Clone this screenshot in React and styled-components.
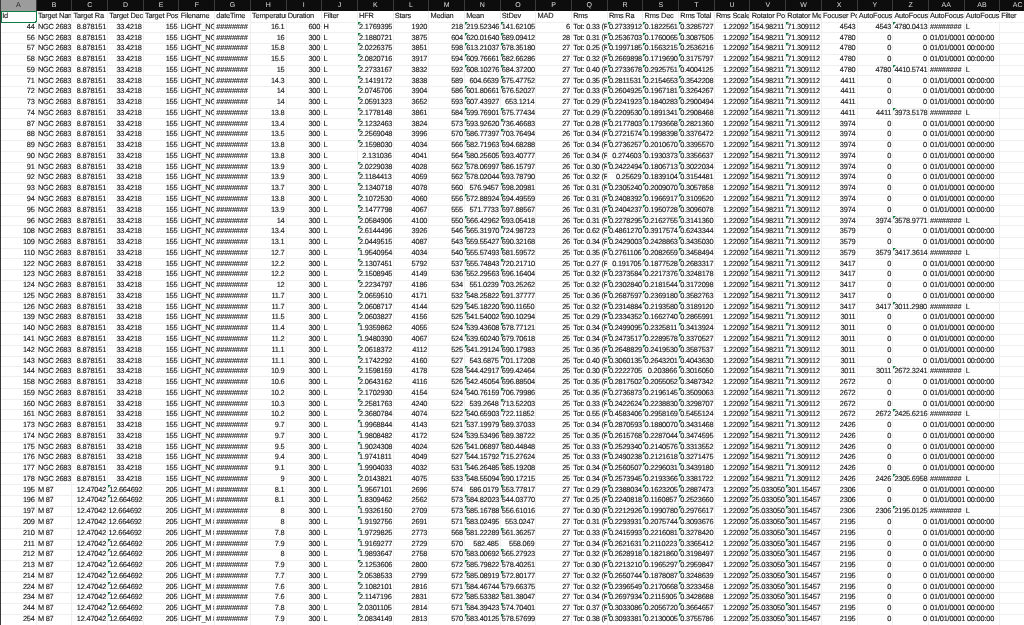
import React from "react";
import styled, { createGlobalStyle } from "styled-components";

const COL_WIDTH = 35.7;
const ROW_HEIGHT = 10.77;
const GREEN = "#107c41";

const GlobalStyle = createGlobalStyle`
  html, body {
    margin: 0;
    padding: 0;
    background: #fff;
  }
`;

const Sheet = styled.div`
  width: 1024px;
  height: 625px;
  overflow: hidden;
  box-sizing: border-box;
  border-left: 1px solid #3a3a3a;
  background: #fff;
  font-family: "Liberation Sans", Arial, sans-serif;
  font-size: 7.4px;
  letter-spacing: -0.2px;
  color: #161616;
  text-rendering: geometricPrecision;
  -webkit-text-stroke: 0.12px #161616;
  filter: blur(0.25px);
`;

const Row = styled.div`
  display: grid;
  grid-template-columns: repeat(29, ${COL_WIDTH}px);
  height: ${ROW_HEIGHT}px;
  line-height: ${ROW_HEIGHT}px;
`;

const ColumnBar = styled(Row)`
  height: 11px;
  line-height: 11px;
  background: #0d0d0d;
`;

const ColumnLabel = styled.div`
  text-align: center;
  font-size: 7px;
  letter-spacing: 0;
  box-sizing: border-box;
  border-right: 1px solid #3c3c3c;
  -webkit-text-stroke: 0;
  color: ${props => (props.$active ? "#1f1f1f" : "#dcdcdc")};
  background: ${props => (props.$active ? "#9c9c9c" : "transparent")};
  border-bottom: ${props => (props.$active ? `1px solid ${GREEN}` : "none")};
`;

const Cell = styled.div`
  position: relative;
  box-sizing: border-box;
  overflow: hidden;
  white-space: nowrap;
  padding: ${props => (props.$right ? "0 1px 0 0" : "0 0 0 1.2px")};
  text-align: ${props => (props.$right ? "right" : "left")};
  border-right: 1px solid #efefef;
  border-bottom: 1px solid #efefef;
  ${props =>
    props.$mark &&
    `&::before {
      content: "";
      position: absolute;
      left: 0;
      top: 0;
      border-style: solid;
      border-width: 3px 3px 0 0;
      border-color: ${GREEN} transparent transparent transparent;
    }`}
`;

// text that runs on into the empty cell on its right, as a sheet does
const SpillCell = styled(Cell)`
  overflow: visible;
  border-right: none;
`;

const SelectedCell = styled(Cell)`
  overflow: visible;
  outline: 1px solid ${GREEN};
  outline-offset: -1px;
  &::after {
    content: "";
    position: absolute;
    right: -1px;
    bottom: -1px;
    width: 2px;
    height: 2px;
    background: ${GREEN};
  }
`;

const EdgeRow = styled(Row)`
  background: #c9c9c9;
`;

const list = s => s.trim().split(/\s+/);

const ids = list(`44 56 57 58 59 71 72 73 74 87 88 89 90 91 92 93 94 95 96 108 109 110 122 123 124 125 126 139 140 141 142 143 144 158 159 160 161 173 174 175 176 177 178 195 196 197 209 210 211 212 213 214 224 234 244 254`);
const temps = list(`16.1 16 15.8 15.5 15 14.3 14 14 13.8 13.4 13.5 13.8 13.8 13.9 13.9 13.7 13.8 13.9 14 13.4 13.1 12.7 12.2 12.2 12 11.7 11.7 11.5 11.4 11.2 11.1 11.1 10.9 10.6 10.2 10.3 10.2 9.7 9.7 9.5 9.4 9.1 9 8.1 8.1 8 8 7.8 7.9 8 7.9 7.7 7.6 7.6 7.8 7.9`);
const hfr = list(`2.1769395 2.1880721 2.0226375 2.0820716 2.2733167 2.1419172 2.0745706 2.0591323 2.1778148 2.1232463 2.2569048 2.1598030 2.131036 2.0229038 2.1184413 2.1340718 2.1072530 2.1477798 2.0584906 2.6144496 2.0449515 1.9540954 2.1307451 2.1508945 2.2234797 2.0659510 2.0608717 2.0603827 1.9359862 1.9480390 2.0618372 2.1742292 2.1598159 2.0643162 2.1702930 2.2581763 2.3680784 1.9968844 1.9808482 1.9024308 1.9741811 1.9904033 2.0143821 1.9567101 1.8309462 1.9326150 1.9192756 1.9729825 1.9169277 1.9893647 2.1253606 2.0538533 2.1082101 2.1147196 2.0301105 2.0834149`);
const stars = list(`1920 3875 3851 3917 3832 3838 3904 3652 3861 3824 3996 4034 4041 4028 4059 4078 4060 4067 4100 3926 4087 4034 5792 4149 4186 4171 4144 4156 4055 4067 4112 4160 4178 4116 4154 4240 4074 4143 4172 4024 4049 4032 4075 2696 2562 2709 2691 2773 2729 2758 2800 2799 2816 2831 2814 2813`);
const medians = list(`218 604 598 594 592 589 586 593 584 573 570 566 564 562 562 560 556 555 550 546 543 540 537 536 534 532 529 525 524 524 525 527 528 526 524 522 522 521 524 526 527 531 533 574 573 573 571 568 570 570 572 572 571 572 571 570`);
const means = list(`219.52346 620.01640 613.21037 609.76661 608.10276 604.6639 601.80661 607.43927 599.76901 593.92620 586.77397 582.71963 580.25605 578.06997 578.02044 576.9457 572.88924 571.7733 566.42962 565.31970 559.55427 555.57493 555.74843 552.29563 551.0239 548.25822 545.18220 541.54002 539.43608 539.60240 541.29124 543.6875 544.42917 542.45054 540.76159 539.2648 540.65903 537.19979 539.53496 541.06897 544.15792 546.26485 548.55094 586.0179 584.82023 585.16788 583.02495 581.22289 582.485 583.00692 585.79822 585.08919 584.46744 585.53382 584.39423 583.40125`);
const stdevs = list(`141.62105 689.09412 678.35180 682.66286 684.37200 675.47752 676.52027 653.1214 675.77434 736.46683 703.76494 694.68288 693.40777 686.15797 693.78790 698.20981 694.49559 697.88567 693.05418 724.98723 690.32168 681.59572 720.21710 696.16404 703.25262 691.37777 690.11650 690.10294 678.77121 679.70618 690.17983 701.17208 699.42464 696.88504 706.79986 713.52203 722.11852 689.37033 689.38722 680.44848 715.27624 685.19208 690.17215 553.77817 544.03770 556.61016 553.0247 561.36257 558.069 565.27923 578.40251 572.80177 579.66375 581.38047 574.70401 578.57699`);
const mads = list(`6 28 27 27 27 27 27 27 27 27 26 26 26 26 26 26 26 26 26 26 26 25 25 25 25 25 25 25 25 25 25 25 25 25 25 25 25 25 25 25 25 25 25 27 27 27 27 27 27 27 27 27 27 27 27 27`);
const rmsTot = list(`33 31 25 32 40 35 33 29 29 28 34 34 34 30 32 31 31 31 31 62 34 35 27 32 32 36 32 29 34 34 36 40 30 35 35 33 55 34 35 33 33 34 34 29 25 30 31 33 34 32 30 32 32 34 37 38`);
const rmsRa = list(`0.2733912 0.2536703 0.1997185 0.2669898 0.2733678 0.2811531 0.2604925 0.2241923 0.2209530 0.2177803 0.2721574 0.2736257 0.274603 0.2422494 0.25629 0.2305240 0.2408392 0.2404237 0.2278295 0.4861270 0.2429003 0.2761106 0.191705 0.2373584 0.2302840 0.2687597 0.2314884 0.2334352 0.2499095 0.2473517 0.2648829 0.3060135 0.2222705 0.2817502 0.2736873 0.2422624 0.4583406 0.2870593 0.2615768 0.2529340 0.2490238 0.2560507 0.2573945 0.2388034 0.2240818 0.2212926 0.2293931 0.2415993 0.2621631 0.2628918 0.2213210 0.2650744 0.2396549 0.2697934 0.3033086 0.3093381`);
const rmsDec = list(`0.1822561 0.1760065 0.1563215 0.1719690 0.2925751 0.2154653 0.1967181 0.1840283 0.1891341 0.1793668 0.1998398 0.2010670 0.1930373 0.1806713 0.1839104 0.2009070 0.1966917 0.1950728 0.2162755 0.3917574 0.2428863 0.2082659 0.1877528 0.2217376 0.2181544 0.2369180 0.2193580 0.1662740 0.2325811 0.2289578 0.2419530 0.2643201 0.203866 0.2055052 0.2196145 0.2238830 0.2958169 0.1880070 0.2287044 0.2140576 0.2121618 0.2296031 0.2193366 0.1623205 0.1160857 0.1990780 0.2075744 0.2216081 0.2110223 0.1821860 0.1965297 0.1878087 0.2170668 0.2115905 0.2056720 0.2130005`);
const rmsTotal = list(`0.3285727 0.3087505 0.2536216 0.3175797 0.4004125 0.3542208 0.3264267 0.2900494 0.2908468 0.2821360 0.3376472 0.3395570 0.3356637 0.3022034 0.3154481 0.3057858 0.3109520 0.3096078 0.3141360 0.6243344 0.3435030 0.3458494 0.2683317 0.3248178 0.3172098 0.3582763 0.3189120 0.2865991 0.3413924 0.3370527 0.3587537 0.4043630 0.3016050 0.3487342 0.3509063 0.3298707 0.5455124 0.3431468 0.3474595 0.3313552 0.3271475 0.3439180 0.3381722 0.2887473 0.2523660 0.2976617 0.3093676 0.3278420 0.3365412 0.3198497 0.2959847 0.3248639 0.3233458 0.3428688 0.3664657 0.3755786`);

// focuser position runs, and the frame each autofocus ran on
const focuserRuns = [[4543, 1], [4780, 4], [4411, 4], [3974, 10], [3579, 3], [3417, 5], [3011, 6], [2672, 4], [2426, 6], [2306, 3], [2195, 10]];
const focusers = focuserRuns.flatMap(([pos, n]) => Array(n).fill(String(pos)));
const autofocus = {
  44: "4780.0413",
  59: "4410.5741",
  74: "3973.5178",
  96: "3578.9771",
  110: "3417.3614",
  126: "3011.2980",
  144: "2672.3241",
  161: "2425.6216",
  178: "2305.6958",
  197: "2195.0125"
};
const plainDecIds = ["197", "209", "210"];

const letters = "A B C D E F G H I J K L M N O P Q R S T U V W X Y Z AA AB AC".split(" ");
const headers = ["Id", "Target Name", "Target Ra", "Target Dec", "Target Pos", "Filename", "dateTime", "Temperature", "Duration", "Filter", "HFR", "Stars", "Median", "Mean", "StDev", "MAD", "Rms", "Rms Ra", "Rms Dec", "Rms Total", "Rms Scale", "Rotator Pos", "Rotator Mech", "Focuser Pos", "AutoFocus Pos", "AutoFocus Val", "AutoFocus Time", "AutoFocus Filter", ""];

const isNumeric = v => /^[\d.]+$/.test(v);
const isLongNumber = v => isNumeric(v) && v.length >= 9;

const rows = ids.map((id, i) => {
  const m87 = i >= 43;
  const af = autofocus[id];
  return [
    id,
    m87 ? "M 87" : "NGC 2683",
    m87 ? "12.47042" : "8.878151",
    m87 ? "12.664692" : "33.4218",
    m87 ? "205" : "155",
    m87 ? "LIGHT_M 87" : "LIGHT_NGC",
    "########",
    temps[i],
    i === 0 ? "600" : "300",
    i === 0 ? "H" : "L",
    hfr[i],
    stars[i],
    medians[i],
    means[i],
    stdevs[i],
    mads[i],
    `Tot: 0.${rmsTot[i]} (RA`,
    rmsRa[i],
    rmsDec[i],
    rmsTotal[i],
    "1.22092",
    m87 ? "25.033050" : "154.98211",
    m87 ? "301.15457" : "71.309112",
    focusers[i],
    af ? focusers[i] : "0",
    af || "0",
    af ? "########" : "01/01/0001 00:00:00",
    af ? "L" : "",
    ""
  ];
});

const DataRow = ({ cells }) => (
  <Row>
    {cells.map((value, c) => {
      const plainDec = c === 3 && plainDecIds.includes(cells[0]);
      const mark = isLongNumber(value) && !plainDec;
      const Kind = value.startsWith("01/01") ? SpillCell : Cell;
      return (
        <Kind key={c} $right={isNumeric(value) && !mark} $mark={mark}>
          {value}
        </Kind>
      );
    })}
  </Row>
);

export default function App() {
  return (
    <>
      <GlobalStyle />
      <Sheet>
        <ColumnBar>
          {letters.map((l, i) => (
            <ColumnLabel key={l} $active={i === 0}>
              {l}
            </ColumnLabel>
          ))}
        </ColumnBar>
        <Row>
          {headers.map((h, i) => {
            if (i === 0) return <SelectedCell key={i}>{h}</SelectedCell>;
            const Kind = h === "AutoFocus Filter" ? SpillCell : Cell;
            return <Kind key={i}>{h}</Kind>;
          })}
        </Row>
        {rows.map(cells => (
          <DataRow key={cells[0]} cells={cells} />
        ))}
        <EdgeRow />
      </Sheet>
    </>
  );
}
